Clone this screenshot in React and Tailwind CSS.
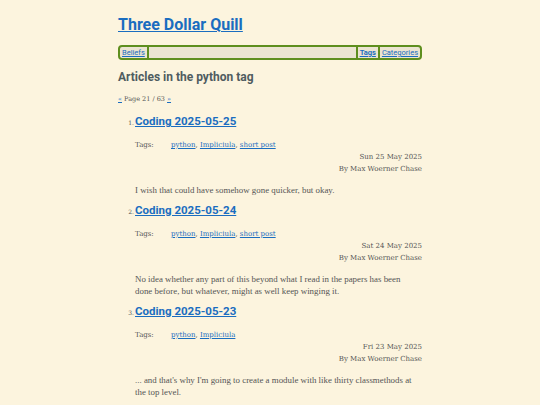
import React from "react";

const posts = [
  {
    n: 1,
    title: "Coding 2025-05-25",
    tags: ["python", "Impliciula", "short post"],
    date: "Sun 25 May 2025",
    body: "I wish that could have somehow gone quicker, but okay.",
  },
  {
    n: 2,
    title: "Coding 2025-05-24",
    tags: ["python", "Impliciula", "short post"],
    date: "Sat 24 May 2025",
    body: "No idea whether any part of this beyond what I read in the papers has been done before, but whatever, might as well keep winging it.",
  },
  {
    n: 3,
    title: "Coding 2025-05-23",
    tags: ["python", "Impliciula"],
    date: "Fri 23 May 2025",
    body: "... and that's why I'm going to create a module with like thirty classmethods at the top level.",
  },
];

const sans = "font-['Roboto','Lato',sans-serif]";
const serif = "font-['DejaVu_Serif','Liberation_Serif',serif]";
const bodySerif = "font-['Liberation_Serif','DejaVu_Serif',serif]";

function Post({ post }) {
  return (
    <li className="flex flex-col">
      <div className="flex items-baseline">
        <span className={`${serif} w-[17px] pr-[1px] text-right text-[6px] text-[#555]`}>{post.n}.</span>
        <a href="#" className={`${sans} text-[11.5px] font-bold leading-[20px] text-[#1a6dc0] underline`}>
          {post.title}
        </a>
      </div>
      <div className={`${serif} pl-[17px] text-[#555]`}>
        <div className="mt-[8px] flex text-[7px] leading-[12px]">
          <span className="w-[36px]">Tags:</span>
          <span>
            {post.tags.map((t, i) => (
              <React.Fragment key={t}>
                <a href="#" className="text-[#1a6dc0] underline">{t}</a>
                {i < post.tags.length - 1 ? ", " : ""}
              </React.Fragment>
            ))}
          </span>
        </div>
        <div className="text-right text-[7px] leading-[12px]">{post.date}</div>
        <div className="text-right text-[7px] leading-[12px]">By Max Woerner Chase</div>
        <p className={`${bodySerif} mt-[9px] pr-[5px] text-[8.9px] leading-[12.5px]`}>{post.body}</p>
      </div>
    </li>
  );
}

export default function App() {
  return (
    <div className="min-h-screen bg-[#fcf4de]">
      <div className="mx-auto w-[304px] pt-[14px]">
        <h1 className={`${sans} text-[16px] font-bold leading-[22px]`}>
          <a href="#" className="text-[#1a6dc0] underline">Three Dollar Quill</a>
        </h1>
        <nav className={`${sans} mt-[9px] flex h-[15px] items-stretch rounded-[4px] border-2 border-[#5e8e1e] bg-[#ebe4d1] text-[7.5px]`}>
          <a href="#" className="flex items-center px-[2px] text-[#1a6dc0] underline">Beliefs</a>
          <span className="w-[2px] bg-[#5e8e1e]" />
          <span className="flex-1" />
          <span className="w-[2px] bg-[#5e8e1e]" />
          <a href="#" className="flex items-center px-[2px] font-bold text-[#1a6dc0] underline">Tags</a>
          <span className="w-[2px] bg-[#5e8e1e]" />
          <a href="#" className="flex items-center px-[2px] text-[#1a6dc0] underline">Categories</a>
        </nav>
        <h2 className={`${sans} mt-[8px] text-[12px] font-bold leading-[18px] text-[#4f5c5f]`}>
          Articles in the python tag
        </h2>
        <p className={`${serif} mt-[8px] text-[6.5px] leading-[10px] text-[#555]`}>
          <a href="#" className="text-[#1a6dc0] underline">«</a> Page 21 / 63{" "}
          <a href="#" className="text-[#1a6dc0] underline">»</a>
        </p>
        <ol className="mt-[7px] flex flex-col gap-[3px]">
          {posts.map((p) => (
            <Post key={p.n} post={p} />
          ))}
        </ol>
      </div>
    </div>
  );
}
